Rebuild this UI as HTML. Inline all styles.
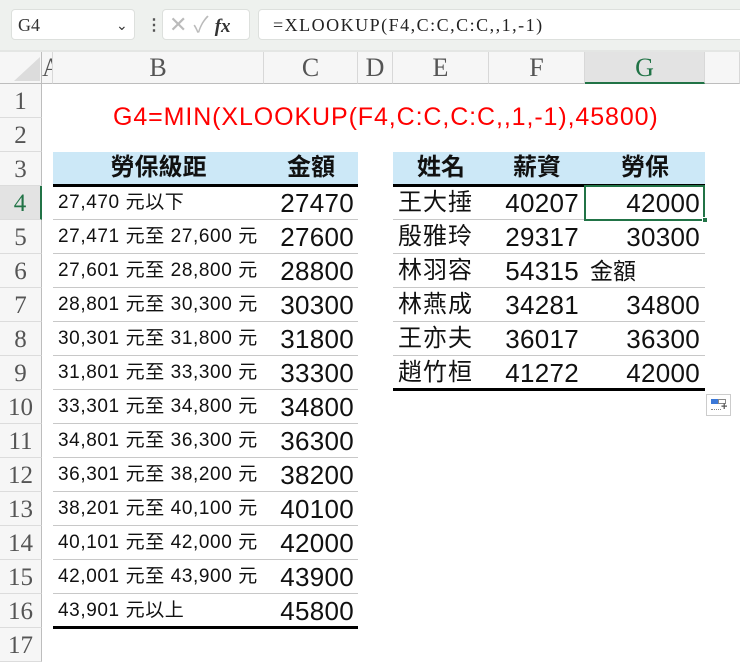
<!DOCTYPE html>
<html><head><meta charset="utf-8"><style>
*{margin:0;padding:0;box-sizing:border-box}
body{width:740px;height:651px;overflow:hidden;background:#fff;position:relative;font-family:"Liberation Sans","Noto Sans CJK TC",sans-serif}
.a{position:absolute}
.top{left:0;top:0;width:740px;height:50px;background:#eef1ee}
.box{background:#fff;border:1px solid #dde0dd;border-radius:4px}
.ch{top:52px;height:32px;border-right:1px solid #d8d8d8;border-bottom:1px solid #bdbdbd;background:#f6f6f6;font-family:"Liberation Serif",serif;font-size:26px;color:#555;text-align:center;line-height:32px}
.rh{left:0;width:42px;height:34px;border-bottom:1px solid #dcdcdc;border-right:1px solid #bdbdbd;background:#f6f6f6;font-family:"Liberation Serif",serif;font-size:25px;color:#555;text-align:center;line-height:36px}
.c{height:34px;line-height:34px;white-space:nowrap;color:#111}
.hd{font-size:24px;font-weight:bold;text-align:center}
.ln{height:1px;background:#c8c8c8}
.thick{height:3px;background:#000}
</style></head><body>
<div class="a top"></div>
<div class="a box" style="left:11px;top:9px;width:124px;height:31px;font-family:'Liberation Serif',serif;font-size:18px;line-height:30px;padding-left:6px;color:#333">G4<span class="a" style="left:104px;top:0;font-family:'Liberation Sans';font-size:14px">&#8964;</span></div>
<div class="a" style="left:146px;top:15px;font-size:16px;color:#555;font-weight:bold">⋮</div>
<div class="a box" style="left:162px;top:9px;width:88px;height:31px;color:#bbb;font-size:22px;line-height:29px;padding-left:6px">✕ ✓ <i style="color:#333;font-family:'Liberation Serif',serif;font-weight:bold;font-size:19px">fx</i></div>
<div class="a box" style="left:258px;top:9px;width:490px;height:31px;font-family:'Liberation Serif',serif;font-size:18px;line-height:30px;padding-left:14px;color:#222;letter-spacing:1.5px">=XLOOKUP(F4,C:C,C:C,,1,-1)</div>
<div class="a" style="left:0;top:50px;width:740px;height:2px;background:#e4e6e4"></div>
<div class="a" style="left:0;top:52px;width:42px;height:32px;background:#f6f6f6;border-right:1px solid #bdbdbd;border-bottom:1px solid #bdbdbd"></div>
<div class="a" style="left:14px;top:57px;width:0;height:0;border-left:26px solid transparent;border-bottom:24px solid #dcdcdc"></div>
<div class="a ch" style="left:42px;width:11px;overflow:hidden;text-align:left">A</div>
<div class="a ch" style="left:53px;width:211px">B</div>
<div class="a ch" style="left:264px;width:94px">C</div>
<div class="a ch" style="left:358px;width:35px">D</div>
<div class="a ch" style="left:393px;width:96px">E</div>
<div class="a ch" style="left:489px;width:96px">F</div>
<div class="a ch" style="left:585px;width:120px;background:#e3e3e3;color:#217346;border-bottom:2px solid #217346">G</div>
<div class="a ch" style="left:705px;width:35px"></div>
<div class="a rh" style="top:84px">1</div><div class="a rh" style="top:118px">2</div><div class="a rh" style="top:152px">3</div>
<div class="a rh" style="top:186px;background:#e3e3e3;color:#217346;border-right:2px solid #217346">4</div>
<div class="a rh" style="top:220px">5</div><div class="a rh" style="top:254px">6</div><div class="a rh" style="top:288px">7</div><div class="a rh" style="top:322px">8</div><div class="a rh" style="top:356px">9</div><div class="a rh" style="top:390px">10</div><div class="a rh" style="top:424px">11</div><div class="a rh" style="top:458px">12</div><div class="a rh" style="top:492px">13</div><div class="a rh" style="top:526px">14</div><div class="a rh" style="top:560px">15</div><div class="a rh" style="top:594px">16</div><div class="a rh" style="top:628px">17</div>

<div class="a" style="left:113px;top:103px;font-size:25px;color:#f00;white-space:nowrap;letter-spacing:0.9px">G4=MIN(XLOOKUP(F4,C:C,C:C,,1,-1),45800)</div>

<div class="a" style="left:53px;top:152px;width:305px;height:32px;background:#cce8f7"></div>
<div class="a c hd" style="left:53px;top:151px;width:211px">勞保級距</div>
<div class="a c hd" style="left:264px;top:151px;width:94px">金額</div>
<div class="a thick" style="left:53px;top:184px;width:305px"></div>

<div class="a" style="left:393px;top:152px;width:312px;height:32px;background:#cce8f7"></div>
<div class="a c hd" style="left:393px;top:151px;width:96px">姓名</div>
<div class="a c hd" style="left:489px;top:151px;width:96px">薪資</div>
<div class="a c hd" style="left:585px;top:151px;width:120px">勞保</div>
<div class="a thick" style="left:393px;top:184px;width:312px"></div>

<div id="L"></div>
<script>
var b=["27,470 元以下","27,471 元至 27,600 元","27,601 元至 28,800 元","28,801 元至 30,300 元","30,301 元至 31,800 元","31,801 元至 33,300 元","33,301 元至 34,800 元","34,801 元至 36,300 元","36,301 元至 38,200 元","38,201 元至 40,100 元","40,101 元至 42,000 元","42,001 元至 43,900 元","43,901 元以上"];
var c=[27470,27600,28800,30300,31800,33300,34800,36300,38200,40100,42000,43900,45800];
var h="";
for(var i=0;i<13;i++){var t=186+i*34;
h+='<div class="a c" style="left:58px;top:'+t+'px;font-size:19px;letter-spacing:0.6px">'+b[i]+'</div>';
h+='<div class="a c" style="left:264px;top:'+t+'px;width:90px;text-align:right;font-size:26px;letter-spacing:0.3px">'+c[i]+'</div>';
if(i<12)h+='<div class="a ln" style="left:53px;top:'+(t+33)+'px;width:305px"></div>';}
h+='<div class="a thick" style="left:53px;top:626px;width:305px"></div>';
var e=["王大捶","殷雅玲","林羽容","林燕成","王亦夫","趙竹桓"],f=[40207,29317,54315,34281,36017,41272],g=["42000","30300","","34800","36300","42000"];
for(i=0;i<6;i++){var t=186+i*34;
h+='<div class="a c" style="left:398px;top:'+t+'px;font-size:24px;letter-spacing:1px">'+e[i]+'</div>';
h+='<div class="a c" style="left:489px;top:'+t+'px;width:90px;text-align:right;font-size:26px;letter-spacing:0.3px">'+f[i]+'</div>';
if(g[i])h+='<div class="a c" style="left:585px;top:'+t+'px;width:115px;text-align:right;font-size:26px;letter-spacing:0.3px">'+g[i]+'</div>';
else h+='<div class="a c" style="left:590px;top:'+t+'px;font-size:23px">金額</div>';
if(i<5)h+='<div class="a ln" style="left:393px;top:'+(t+33)+'px;width:312px"></div>';}
h+='<div class="a thick" style="left:393px;top:388px;width:312px"></div>';
document.getElementById("L").innerHTML=h;
</script>
<div class="a" style="left:584px;top:185px;width:121px;height:36px;border:2px solid #217346"></div>
<div class="a" style="left:702px;top:217px;width:6px;height:6px;background:#217346;border:1px solid #fff"></div>
<div class="a" style="left:706px;top:394px;width:25px;height:22px;border:1px solid #ccc;background:#fff">
<div class="a" style="left:4px;top:4px;width:7px;height:5px;background:#3b78d8"></div>
<div class="a" style="left:11px;top:4px;width:8px;height:5px;border:1px solid #888"></div>
<div class="a" style="left:4px;top:11px;width:10px;height:4px;border-bottom:1px dotted #888"></div>
<div class="a" style="left:14px;top:6px;font-size:11px;font-weight:bold;color:#555">+</div></div>
</body></html>
